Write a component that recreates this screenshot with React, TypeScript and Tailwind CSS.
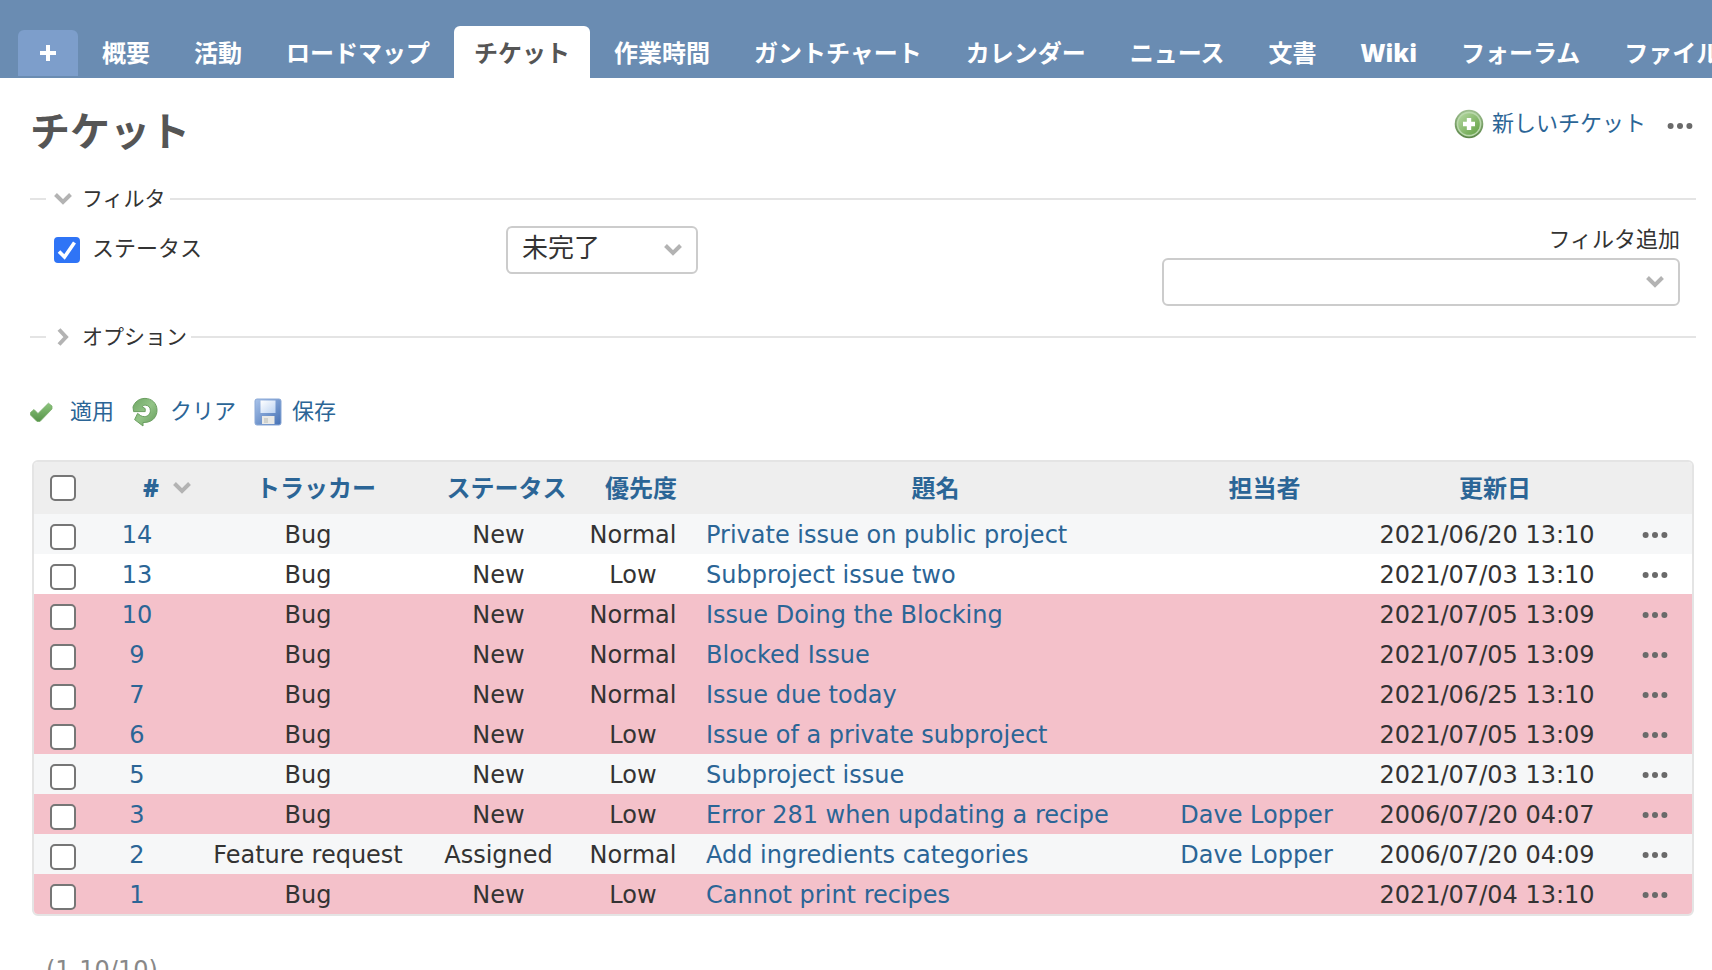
import React from "react";

type Issue = {
  id: number;
  tracker: string;
  status: string;
  priority: string;
  subject: string;
  assignee?: string;
  updated: string;
  overdue?: boolean;
};

const tabs = [
  "概要",
  "活動",
  "ロードマップ",
  "チケット",
  "作業時間",
  "ガントチャート",
  "カレンダー",
  "ニュース",
  "文書",
  "Wiki",
  "フォーラム",
  "ファイル",
];

const issues: Issue[] = [
  { id: 14, tracker: "Bug", status: "New", priority: "Normal", subject: "Private issue on public project", updated: "2021/06/20 13:10" },
  { id: 13, tracker: "Bug", status: "New", priority: "Low", subject: "Subproject issue two", updated: "2021/07/03 13:10" },
  { id: 10, tracker: "Bug", status: "New", priority: "Normal", subject: "Issue Doing the Blocking", updated: "2021/07/05 13:09", overdue: true },
  { id: 9, tracker: "Bug", status: "New", priority: "Normal", subject: "Blocked Issue", updated: "2021/07/05 13:09", overdue: true },
  { id: 7, tracker: "Bug", status: "New", priority: "Normal", subject: "Issue due today", updated: "2021/06/25 13:10", overdue: true },
  { id: 6, tracker: "Bug", status: "New", priority: "Low", subject: "Issue of a private subproject", updated: "2021/07/05 13:09", overdue: true },
  { id: 5, tracker: "Bug", status: "New", priority: "Low", subject: "Subproject issue", updated: "2021/07/03 13:10" },
  { id: 3, tracker: "Bug", status: "New", priority: "Low", subject: "Error 281 when updating a recipe", assignee: "Dave Lopper", updated: "2006/07/20 04:07", overdue: true },
  { id: 2, tracker: "Feature request", status: "Assigned", priority: "Normal", subject: "Add ingredients categories", assignee: "Dave Lopper", updated: "2006/07/20 04:09" },
  { id: 1, tracker: "Bug", status: "New", priority: "Low", subject: "Cannot print recipes", updated: "2021/07/04 13:10", overdue: true },
];

function ChevronDown({ className = "" }: { className?: string }) {
  return (
    <svg viewBox="0 0 18 12" className={`h-3 w-[18px] ${className}`} fill="none" stroke="#b3b3b3" strokeWidth="4" aria-hidden="true">
      <path d="M1.5 1.5 9 9l7.5-7.5" />
    </svg>
  );
}

function ChevronRight() {
  return (
    <svg viewBox="0 0 12 18" className="mx-[3px] h-[18px] w-3" fill="none" stroke="#b3b3b3" strokeWidth="4" aria-hidden="true">
      <path d="M2 1.5 9 9l-7 7.5" />
    </svg>
  );
}

function Dots() {
  return (
    <svg viewBox="0 0 28 8" className="h-2 w-7" fill="#6a6a6a" aria-hidden="true">
      <circle cx="4.6" cy="4" r="3" />
      <circle cx="14" cy="4" r="3" />
      <circle cx="23.4" cy="4" r="3" />
    </svg>
  );
}

function AddIcon() {
  return (
    <svg viewBox="0 0 30 30" className="size-[30px]" aria-hidden="true">
      <defs>
        <linearGradient id="add-fill" x1="0" y1="0" x2="1" y2="1">
          <stop offset="0" stopColor="#b5d8a2" />
          <stop offset="1" stopColor="#62a043" />
        </linearGradient>
        <linearGradient id="add-rim" x1="0" y1="0" x2="0" y2="1">
          <stop offset="0" stopColor="#9fbf90" />
          <stop offset="1" stopColor="#5b8648" />
        </linearGradient>
      </defs>
      <circle cx="15" cy="15" r="14.3" fill="url(#add-rim)" />
      <circle cx="15" cy="15" r="12.4" fill="#b9d8ab" />
      <circle cx="15" cy="15" r="10.8" fill="url(#add-fill)" />
      <path d="M12.8 9h4.4v3.8H21v4.4h-3.8V21h-4.4v-3.8H9v-4.4h3.8z" fill="#fff" />
    </svg>
  );
}

function CheckIcon() {
  return (
    <svg viewBox="0 0 24 22" className="h-[22px] w-6" aria-hidden="true">
      <defs>
        <linearGradient id="check-fill" x1="0" y1="0" x2="0" y2="1">
          <stop offset="0" stopColor="#8cc47c" />
          <stop offset="1" stopColor="#57944a" />
        </linearGradient>
      </defs>
      <path d="M0.500 11.500 4 8.500l4 4L18.400 2.200 22 5v3L10 20.500H7L0.500 14z" fill="url(#check-fill)" stroke="#79ad6b" strokeWidth="0.8" />
    </svg>
  );
}

function ReloadIcon() {
  return (
    <svg viewBox="0 0 26 30" className="h-[30px] w-[26px]" aria-hidden="true">
      <defs>
        <linearGradient id="reload-fill" x1="0" y1="0" x2="1" y2="1">
          <stop offset="0" stopColor="#6fa765" />
          <stop offset="0.5" stopColor="#93c487" />
          <stop offset="1" stopColor="#649a5a" />
        </linearGradient>
      </defs>
      <path
        d="M1 10C2.800 4.600 7.400 1.400 13 1.400c6.800 0 12 5 12 11.800 0 6.200-4 11-10 12l-4 .4v3.400L2.600 22.600l3-6.200 3 2.200c1 .7 2.400 1 3.800 1 3.600 0 6-2.600 6-6 0-3.200-2.200-5.400-5-5.400-1.400 0-2.600.6-3.200 1.600l3 1.800v3H1.600z"
        fill="url(#reload-fill)"
        stroke="#6a9e60"
        strokeWidth="1"
        strokeLinejoin="round"
      />
    </svg>
  );
}

function SaveIcon() {
  return (
    <svg viewBox="0 0 28 28" className="size-7" aria-hidden="true">
      <defs>
        <linearGradient id="save-fill" x1="0" y1="0" x2="1" y2="1">
          <stop offset="0" stopColor="#a9c3ea" />
          <stop offset="1" stopColor="#4470b4" />
        </linearGradient>
        <linearGradient id="save-label" x1="0" y1="0" x2="1" y2="1">
          <stop offset="0" stopColor="#ffffff" />
          <stop offset="1" stopColor="#bcd3f2" />
        </linearGradient>
      </defs>
      <rect x="1" y="1" width="26" height="26" rx="2" fill="url(#save-fill)" stroke="#8aa8d6" strokeWidth="1" />
      <rect x="6.500" y="2.500" width="15" height="12.500" fill="url(#save-label)" />
      <rect x="8" y="18" width="12.500" height="8" fill="#e9e9e6" />
      <rect x="10" y="20" width="4" height="5" fill="#d0d2ce" />
    </svg>
  );
}

function RowCheckbox({ label }: { label: string }) {
  return (
    <input
      type="checkbox"
      aria-label={label}
      className="block size-[26px] appearance-none rounded-[5px] border-2 border-[#767676] bg-white checked:bg-[#2f74f6]"
    />
  );
}

const headLink = "text-[#2b6596] hover:underline";
const th = "h-[52px] px-1 text-center font-bold";
const td = "h-10 whitespace-nowrap pb-0 pl-1 pr-5 pt-0.5 text-center";

export default function App() {
  return (
    <div className="overflow-x-hidden bg-white font-['DejaVu_Sans','Noto_Sans_CJK_JP',sans-serif] text-[#333]">
      <header className="bg-[#6a8cb2] pt-[26px]">
        <nav className="flex items-end gap-1 pl-[18px] font-['Open_Sans','Noto_Sans_CJK_JP',sans-serif] text-2xl font-bold">
          <button
            type="button"
            aria-label="+"
            className="mb-0.5 flex h-[46px] w-[60px] shrink-0 items-center justify-center rounded-t-md bg-[#7d9ecb] text-white"
          >
            <svg viewBox="0 0 16 16" className="size-4" stroke="#fff" strokeWidth="4" aria-hidden="true">
              <path d="M8 0v16M0 8h16" />
            </svg>
          </button>
          {tabs.map((tab) => (
            <a
              key={tab}
              href="#"
              className={
                tab === "チケット"
                  ? "h-[52px] shrink-0 whitespace-nowrap rounded-t-md bg-white px-5 leading-[54px] text-[#555]"
                  : tab === "Wiki"
                    ? "h-[52px] shrink-0 whitespace-nowrap px-5 font-extrabold leading-[54px] text-white"
                    : "h-[52px] shrink-0 whitespace-nowrap px-5 leading-[54px] text-white"
              }
            >
              {tab}
            </a>
          ))}
        </nav>
      </header>

      <main className="pl-[30px] pr-4">
        <div className="flex items-start justify-between">
          <h1 className="pt-6 text-[40px] font-bold leading-[60px] text-[#555]">チケット</h1>
          <div className="mt-[31px] flex h-[30px] items-center">
            <a href="#" className="flex items-center gap-2 text-[22px] leading-[30px] text-[#2b6596]">
              <AddIcon />
              新しいチケット
            </a>
            <button type="button" aria-label="操作" className="ml-5 mr-0.5 flex h-[30px] items-center pt-1">
              <Dots />
            </button>
          </div>
        </div>

        <form onSubmit={(e) => e.preventDefault()}>
          <fieldset className="mt-[25px] border-t-2 border-[#e4e4e4]">
            <legend className="ml-4 pl-2 pr-1 text-[21px] leading-6">
              <button type="button" className="flex items-center gap-2.5">
                <ChevronDown />
                フィルタ
              </button>
            </legend>
            <div className="flex items-start pr-4 pt-[15px]">
              <label className="ml-6 flex h-12 w-[452px] items-center gap-3 text-[22px]">
                <span className="relative block size-[26px]">
                  <input type="checkbox" defaultChecked className="peer block size-[26px] appearance-none rounded-[4px] border-2 border-[#767676] checked:border-[#2f74f6] checked:bg-[#2f74f6]" />
                  <svg viewBox="0 0 26 26" className="pointer-events-none absolute inset-0 hidden size-[26px] peer-checked:block" fill="none" stroke="#fff" strokeWidth="3.6" aria-hidden="true">
                    <path d="M5 14.500 10.500 20 20.500 5.500" />
                  </svg>
                </span>
                <span className="pb-1">ステータス</span>
              </label>
              <div className="relative">
                <select aria-label="ステータス" className="block h-12 w-48 appearance-none rounded-md border-2 border-[#ccc] bg-white pb-1 pl-[14px] text-[26px] leading-8">
                  <option>未完了</option>
                </select>
                <ChevronDown className="pointer-events-none absolute right-4 top-[18px]" />
              </div>
              <div className="ml-auto flex flex-col items-end gap-1">
                <label htmlFor="add-filter" className="text-[22px] leading-7">
                  フィルタ追加
                </label>
                <div className="relative">
                  <select id="add-filter" className="block h-12 w-[518px] appearance-none rounded-md border-2 border-[#ccc] bg-white pl-4 text-2xl">
                    <option></option>
                  </select>
                  <ChevronDown className="pointer-events-none absolute right-4 top-[18px]" />
                </div>
              </div>
            </div>
          </fieldset>

          <fieldset className="mt-[19px] border-t-2 border-[#e4e4e4]">
            <legend className="ml-4 pl-2 pr-1 text-[21px] leading-6">
              <button type="button" className="flex items-center gap-2.5">
                <ChevronRight />
                オプション
              </button>
            </legend>
          </fieldset>

          <div className="mt-12 flex h-[30px] items-center gap-[18px] text-[22px] leading-[30px] text-[#2b6596]">
            <a href="#" className="flex items-center gap-4">
              <CheckIcon />
              適用
            </a>
            <a href="#" className="flex items-center gap-3">
              <ReloadIcon />
              クリア
            </a>
            <a href="#" className="flex items-center gap-2.5">
              <SaveIcon />
              保存
            </a>
          </div>
        </form>

        <div className="ml-0.5 mr-0.5 mt-[33px] overflow-hidden rounded-md border-2 border-[#e4e4e4]">
          <table className="w-full table-fixed border-collapse text-2xl leading-8">
            <colgroup>
              <col className="w-[57px]" />
              <col className="w-[108px]" />
              <col className="w-[234px]" />
              <col className="w-[147px]" />
              <col className="w-[122px]" />
              <col />
              <col className="w-[191px]" />
              <col className="w-[270px]" />
              <col className="w-[62px]" />
            </colgroup>
            <thead className="bg-[#eee] font-['Open_Sans','Noto_Sans_CJK_JP',sans-serif]">
              <tr>
                <th className="h-[52px] py-0 pl-4 pr-0">
                  <RowCheckbox label="すべて選択" />
                </th>
                <th className={th}>
                  <a href="#" className="flex items-center justify-end gap-[14px] pr-1 font-extrabold text-[#2b6596]">
                    #
                    <ChevronDown />
                  </a>
                </th>
                <th className={th}><a href="#" className={headLink}>トラッカー</a></th>
                <th className={th}><a href="#" className={headLink}>ステータス</a></th>
                <th className={th}><a href="#" className={headLink}>優先度</a></th>
                <th className={th}><a href="#" className={headLink}>題名</a></th>
                <th className={th}><a href="#" className={headLink}>担当者</a></th>
                <th className={th}><a href="#" className={headLink}>更新日</a></th>
                <th className={th}></th>
              </tr>
            </thead>
            <tbody>
              {issues.map((issue) => (
                <tr key={issue.id} className={issue.overdue ? "bg-[#f4c1ca]" : "odd:bg-[#f6f7f8] even:bg-white"}>
                  <td className="h-10 pb-0 pl-4 pr-0 pt-1.5">
                    <RowCheckbox label={`#${issue.id}`} />
                  </td>
                  <td className={td}><a href="#" className={headLink}>{issue.id}</a></td>
                  <td className={td}>{issue.tracker}</td>
                  <td className={td}>{issue.status}</td>
                  <td className={td}>{issue.priority}</td>
                  <td className="h-10 whitespace-nowrap pb-0 pl-1 pr-5 pt-0.5 text-left"><a href="#" className={headLink}>{issue.subject}</a></td>
                  <td className={td}>{issue.assignee && <a href="#" className={headLink}>{issue.assignee}</a>}</td>
                  <td className={td}>{issue.updated}</td>
                  <td className="h-10 p-0 pt-0.5">
                    <button type="button" aria-label="操作" className="ml-[11px] block">
                      <Dots />
                    </button>
                  </td>
                </tr>
              ))}
            </tbody>
          </table>
        </div>

        <p className="ml-4 mt-9 text-2xl leading-9 text-[#888]">(1-10/10)</p>
      </main>
    </div>
  );
}
